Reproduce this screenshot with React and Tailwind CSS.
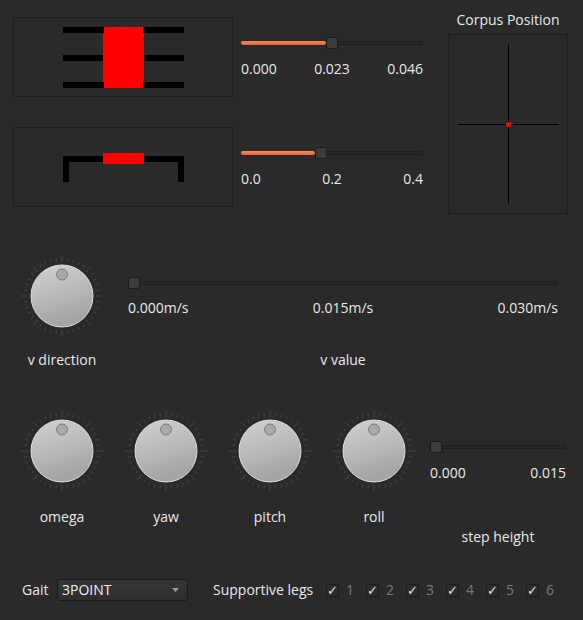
const text = "text-[#e8e8e8]";

function Slider({ width, pos }) {
  return (
    <div className="relative h-[12px]" style={{ width }}>
      <div className="absolute left-0 right-0 top-[4px] h-[4px] rounded-[2px] border border-[#1f1f1f] bg-[#262626]" />
      <div
        className="absolute left-0 top-[4px] h-[4px] rounded-[2px] bg-gradient-to-b from-[#ff8a5a] to-[#e8653a]"
        style={{ width: pos }}
      />
      <div
        className="absolute top-0 h-[12px] w-[12px] rounded-[2px] border border-[#1c1c1c] bg-[#3b3b3b]"
        style={{ left: pos }}
      />
    </div>
  );
}

function Knob() {
  const ticks = Array.from({ length: 40 }, (_, i) => i);
  return (
    <svg width="84" height="84" viewBox="0 0 84 84">
      <defs>
        <linearGradient id="knobFill" x1="0" y1="0" x2="0.3" y2="1">
          <stop offset="0" stopColor="#d2d2d2" />
          <stop offset="1" stopColor="#a4a4a4" />
        </linearGradient>
      </defs>
      {ticks.map((i) => {
        const a = (i * 9 * Math.PI) / 180;
        const r1 = i % 5 === 0 ? 34 : 35;
        const r2 = i % 5 === 0 ? 41 : 38.5;
        return (
          <line
            key={i}
            x1={42 + r1 * Math.sin(a)}
            y1={42 - r1 * Math.cos(a)}
            x2={42 + r2 * Math.sin(a)}
            y2={42 - r2 * Math.cos(a)}
            stroke="#454545"
            strokeWidth="1"
          />
        );
      })}
      <circle cx="42" cy="42" r="31" fill="url(#knobFill)" stroke="#dcdcdc" strokeWidth="1" />
      <circle cx="42" cy="20.5" r="5.5" fill="#a9a9a9" stroke="#7c7c7c" strokeWidth="1" />
    </svg>
  );
}

function Check({ n }) {
  return (
    <div className="flex w-[40px] items-center">
      <div className="flex h-[13px] w-[13px] items-center justify-center border border-[#1c1c1c] bg-[#2c2c2c] text-[13px] leading-none text-[#e0e0e0]">
        ✓
      </div>
      <span className="ml-[7px] text-[#7a7a7a]">{n}</span>
    </div>
  );
}

export default function App() {
  return (
    <div className={`h-[620px] w-[583px] overflow-hidden bg-[#2a2a2a] font-['Open_Sans',sans-serif] text-[14px] leading-[18px] ${text}`}>
      {/* top */}
      <div className="flex pt-[17px]">
        <div className="flex flex-col gap-[30px] pl-[13px]">
          <div className="flex">
            <div className="h-[80px] w-[220px] border border-[#1f1f1f]">
              <svg width="218" height="78" viewBox="1 1 218 78">
                <rect x="50" y="10" width="121" height="6" fill="#000" />
                <rect x="50" y="38" width="121" height="6" fill="#000" />
                <rect x="50" y="65" width="121" height="6" fill="#000" />
                <rect x="91" y="10" width="39" height="61" fill="#ff0000" />
                <rect x="90" y="16" width="41" height="49" fill="#ff0000" />
              </svg>
            </div>
            <div className="ml-[8px] pt-[20px]">
              <Slider width={182} pos={85} />
              <div className="mt-[11px] flex justify-between">
                <span>0.000</span>
                <span>0.023</span>
                <span>0.046</span>
              </div>
            </div>
          </div>
          <div className="flex">
            <div className="h-[80px] w-[220px] border border-[#1f1f1f]">
              <svg width="218" height="78" viewBox="1 1 218 78">
                <rect x="50" y="29" width="121" height="6" fill="#000" />
                <rect x="50" y="29" width="6" height="26" fill="#000" />
                <rect x="165" y="29" width="6" height="26" fill="#000" />
                <rect x="90" y="26" width="41" height="11" fill="#ff0000" />
              </svg>
            </div>
            <div className="ml-[8px] pt-[20px]">
              <Slider width={182} pos={74} />
              <div className="mt-[11px] flex justify-between">
                <span>0.0</span>
                <span>0.2</span>
                <span>0.4</span>
              </div>
            </div>
          </div>
        </div>
        <div className="-mt-[6px] ml-[25px] flex w-[120px] flex-col">
          <div className="h-[18px] whitespace-nowrap text-center">Corpus Position</div>
          <div className="mt-[5px] h-[180px] w-[120px] border border-[#1f1f1f]">
            <svg width="118" height="178" viewBox="1 1 118 178">
              <line x1="60.5" y1="10" x2="60.5" y2="170" stroke="#000" strokeWidth="1" />
              <line x1="10" y1="90.5" x2="111" y2="90.5" stroke="#000" strokeWidth="1" />
              <circle cx="60.5" cy="90.5" r="2.5" fill="#ff0000" />
            </svg>
          </div>
        </div>
      </div>

      {/* velocity */}
      <div className="mt-[40px] flex">
        <div className="ml-[20px]">
          <Knob />
        </div>
        <div className="ml-[24px] pt-[23px]">
          <Slider width={430} pos={0} />
          <div className="mt-[10px] flex justify-between">
            <span>0.000m/s</span>
            <span>0.015m/s</span>
            <span>0.030m/s</span>
          </div>
        </div>
      </div>
      <div className="mt-[13px] flex">
        <div className="ml-[20px] w-[84px] whitespace-nowrap text-center">v direction</div>
        <div className="ml-[24px] w-[430px] text-center">v value</div>
      </div>

      {/* attitude */}
      <div className="mt-[40px] flex pl-[20px]">
        <div className="flex gap-[20px]">
          {["omega", "yaw", "pitch", "roll"].map((l) => (
            <div key={l} className="flex w-[84px] flex-col items-center">
              <Knob />
              <div className="mt-[15px]">{l}</div>
            </div>
          ))}
        </div>
        <div className="ml-[14px] flex w-[136px] flex-col pt-[32px]">
          <Slider width={136} pos={0} />
          <div className="mt-[11px] flex justify-between">
            <span>0.000</span>
            <span>0.015</span>
          </div>
          <div className="mt-[46px] text-center">step height</div>
        </div>
      </div>

      {/* bottom */}
      <div className="mt-[33px] flex h-[22px] items-center pl-[22px]">
        <span className="w-[35px]">Gait</span>
        <div className="flex h-[22px] w-[131px] items-center justify-between rounded-[3px] border border-[#1a1a1a] bg-gradient-to-b from-[#363636] to-[#2e2e2e] pl-[4px] pr-[8px]">
          <span className="text-[#f0f0f0]">3POINT</span>
          <svg width="7" height="4" viewBox="0 0 7 4">
            <polygon points="0,0 7,0 3.5,4" fill="#9a9a9a" />
          </svg>
        </div>
        <span className="ml-[25px] w-[106px] whitespace-nowrap">Supportive legs</span>
        <div className="ml-[7px] flex">
          {[1, 2, 3, 4, 5, 6].map((n) => (
            <Check key={n} n={n} />
          ))}
        </div>
      </div>
    </div>
  );
}
